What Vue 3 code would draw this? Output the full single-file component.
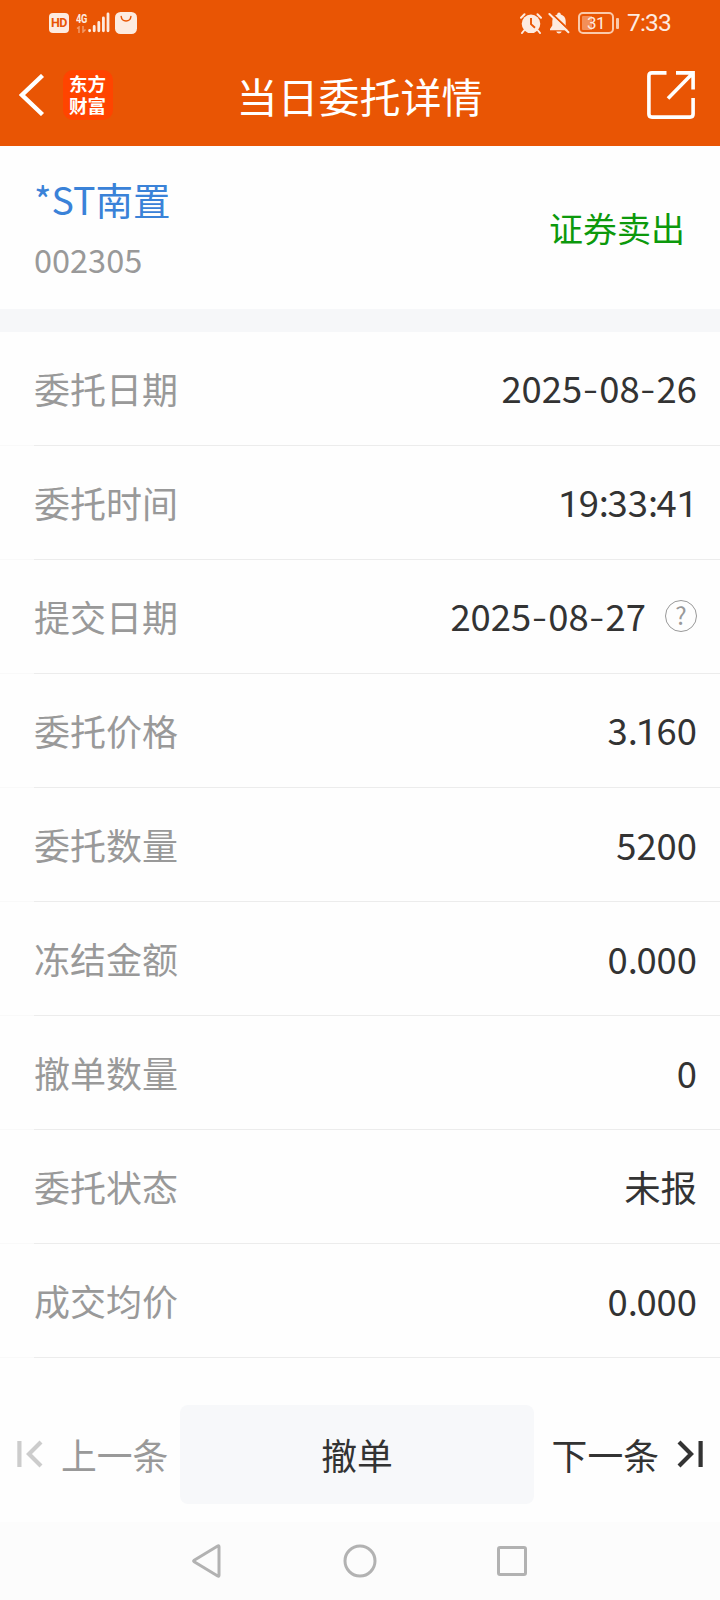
<script setup>
import { ref } from 'vue';

const stock = ref({ name: '*ST南置', code: '002305', side: '证券卖出' });

const rows = ref([
  { label: '委托日期', value: '2025-08-26' },
  { label: '委托时间', value: '19:33:41' },
  { label: '提交日期', value: '2025-08-27', help: true },
  { label: '委托价格', value: '3.160' },
  { label: '委托数量', value: '5200' },
  { label: '冻结金额', value: '0.000' },
  { label: '撤单数量', value: '0' },
  { label: '委托状态', value: '未报' },
  { label: '成交均价', value: '0.000' },
]);

// punctuation and ones are styled apart from the other digits
const partClasses = { '-': 'dash', 1: 'one', ':': 'colon', '.': 'dot' };

function splitValue(value) {
  return value.split(/([-1:.])/).filter(Boolean);
}
</script>

<template>
  <div class="page">
    <header class="header">
      <div class="status-bar">
        <div class="status-left">
          <span class="hd">HD</span>
          <span class="network">
            <span class="network-type">4G</span>
            <svg class="network-arrows" width="10" height="7" viewBox="0 0 10 7">
              <path d="M1 2.5 3 1v6M7 0v6l2.500-2.500" fill="none" stroke="#fff" stroke-width="1.500" />
            </svg>
          </span>
          <svg class="signal" width="22" height="21" viewBox="0 0 22 21">
            <g stroke="#fdebe0" stroke-width="2.800" stroke-linecap="round">
              <path d="M1.600 18.400v.4M6.200 14.500v4.300M10.800 10.500v8.300M15.400 6v12.800M20 2v16.800" />
            </g>
          </svg>
          <svg class="bag" width="22" height="22" viewBox="0 0 22 22">
            <rect width="22" height="22" rx="5.500" fill="#fdebe0" />
            <path d="M6.200 4.500c.7 6 9 6 9.700 0" fill="none" stroke="#e95504" stroke-width="1.500" stroke-linecap="round" />
          </svg>
        </div>
        <div class="status-right">
          <svg width="22" height="21" viewBox="0 0 22 21">
            <circle cx="11" cy="10.800" r="9.300" fill="#fdebe0" />
            <path d="M1 4.800 4.500 1.200M21 4.800 17.500 1.200M4 17.500 2 20M18 17.500 20 20" stroke="#fdebe0" stroke-width="2" stroke-linecap="round" />
            <path d="M11 5v6.200l4 3.600" fill="none" stroke="#e95504" stroke-width="1.900" />
          </svg>
          <svg class="bell" width="22" height="22" viewBox="0 0 22 22">
            <path d="M9.200 2.600c0-2.800 3.600-2.800 3.600 0 3 .8 4.900 3.300 4.900 6.500v4.500l2.300 3.400v1.200H2v-1.200l2.300-3.400V9.100c0-3.200 1.900-5.700 4.900-6.500zM8.300 19.600h5.400c-.7 2.600-4.700 2.600-5.400 0z" fill="#fdebe0" />
            <path d="M2.800.8 22 18.800" stroke="#e95504" stroke-width="2" />
            <path d="M1.400 2 20.400 20.200" stroke="#fdebe0" stroke-width="2" stroke-linecap="round" />
          </svg>
          <span class="battery">
            <span class="battery-body"><span class="battery-level">31</span></span>
            <span class="battery-cap"></span>
          </span>
          <span class="clock">7:33</span>
        </div>
      </div>
      <div class="title-bar">
        <div class="title-side">
          <svg width="26" height="42" viewBox="0 0 26 42">
            <path d="M23.500 1.500 3 21l20.500 19.500" fill="none" stroke="#fff" stroke-width="4.400" />
          </svg>
          <span class="logo">东方财富</span>
        </div>
        <h1 class="title">当日委托详情</h1>
        <div class="title-side end">
          <svg width="48" height="48" viewBox="0 0 48 48">
            <path d="M19.500 1.900H5Q1.900 1.900 1.900 5v38Q1.900 46.100 5 46.100h38q3.100 0 3.100-3.100V27M29 1.900h17.100V18.500M45.500 2.500 21 27.500" fill="none" stroke="#fff" stroke-width="3.600" />
          </svg>
        </div>
      </div>
    </header>

    <section class="summary">
      <div class="stock">
        <div class="stock-name">{{ stock.name }}</div>
        <div class="stock-code">{{ stock.code }}</div>
      </div>
      <div class="side">{{ stock.side }}</div>
    </section>

    <ul class="rows">
      <li v-for="row in rows" :key="row.label" class="row">
        <span class="row-label">{{ row.label }}</span>
        <span class="row-value">
          <span><span v-for="(part, i) in splitValue(row.value)" :key="i" :class="partClasses[part]">{{ part }}</span></span>
          <span v-if="row.help" class="help">?</span>
        </span>
      </li>
    </ul>

    <footer class="actions">
      <button type="button" class="step prev" disabled>
        <svg width="26" height="28" viewBox="0 0 26 28">
          <path d="M2.400 1v26M24 2 12 14l12 12" fill="none" stroke="currentColor" stroke-width="4.200" />
        </svg>
        <span>上一条</span>
      </button>
      <button type="button" class="cancel">撤单</button>
      <button type="button" class="step next">
        <span>下一条</span>
        <svg width="26" height="28" viewBox="0 0 26 28">
          <path d="M23.600 1v26M2 2l12 12L2 26" fill="none" stroke="currentColor" stroke-width="4.200" />
        </svg>
      </button>
    </footer>

    <nav class="system-nav">
      <svg width="34" height="34" viewBox="0 0 34 34">
        <path d="M28 2.800v28.400q0 1.500-1.300.8L3.200 17.800q-1.200-.8 0-1.600l23.500-14.200q1.300-.7 1.300.8z" />
      </svg>
      <svg width="34" height="34" viewBox="0 0 34 34">
        <circle cx="17" cy="17" r="15" />
      </svg>
      <svg width="34" height="34" viewBox="0 0 34 34">
        <rect x="3.500" y="3.500" width="27" height="27" rx="1.500" />
      </svg>
    </nav>
  </div>
</template>

<style>
body {
  margin: 0;
  background: #fefefe;
}
</style>

<style scoped>
.page {
  display: flex;
  flex-direction: column;
  width: 720px;
  height: 1600px;
  overflow: hidden;
  background: #fefefe;
  color: #333;
  font-family: 'Noto Sans CJK SC', sans-serif;
}

svg {
  display: block;
  flex: none;
}

.header {
  height: 146px;
  background: #e95504;
  color: #fff;
}

.status-bar {
  display: flex;
  justify-content: space-between;
  height: 46px;
  padding: 0 49px;
  box-sizing: border-box;
  color: #fdebe0;
  font-family: Roboto, sans-serif;
}

.status-left,
.status-right {
  display: flex;
  align-items: center;
}

.hd {
  width: 20px;
  height: 20px;
  border-radius: 4px;
  background: #fdebe0;
  color: #e95504;
  font-size: 12.5px;
  font-weight: 700;
  line-height: 20px;
  text-align: center;
  letter-spacing: -0.5px;
}

.network {
  display: flex;
  flex-direction: column;
  width: 11px;
  margin-left: 7px;
}

.network-type {
  width: 14px;
  font-size: 12.5px;
  font-weight: 700;
  line-height: 12px;
  letter-spacing: -0.3px;
  transform: scaleX(0.74);
  transform-origin: left;
}

.network-arrows {
  margin-top: 1px;
  opacity: 0.4;
}

.signal {
  margin: -1px 0 0 1px;
}

.bag {
  margin-left: 5px;
}

.bell {
  margin-left: 6px;
}

.battery {
  display: flex;
  align-items: center;
  margin-left: 8px;
}

.battery-body {
  width: 36px;
  height: 22px;
  padding: 2px;
  border: 2px solid #fbc9aa;
  border-radius: 5px;
  box-sizing: border-box;
}

.battery-level {
  display: block;
  width: 28px;
  height: 14px;
  border-radius: 1px;
  background: linear-gradient(90deg, #f38f58 35%, transparent 35%);
  font-size: 17px;
  line-height: 15px;
  text-align: center;
  letter-spacing: -0.5px;
}

.battery-cap {
  width: 3px;
  height: 11px;
  margin-left: 2px;
  border-radius: 1px;
  background: #fbc9aa;
}

.clock {
  margin-left: 8px;
  font-size: 24.5px;
  line-height: 46px;
  letter-spacing: -0.8px;
}

.title-bar {
  display: flex;
  align-items: center;
  height: 100px;
  padding: 0 25px 2px 19px;
  box-sizing: border-box;
}

.title-side {
  display: flex;
  flex: 1;
  align-items: center;
}

.title-side.end {
  justify-content: flex-end;
}

.logo {
  width: 50px;
  height: 50px;
  margin-left: 18px;
  padding: 2px 6px 4px;
  border-radius: 10px;
  box-sizing: border-box;
  background: #ff4400;
  font-size: 18.500px;
  font-weight: 700;
  line-height: 22px;
  word-break: break-all;
}

.title {
  margin: 0;
  padding-left: 5px;
  font-size: 41px;
  font-weight: 400;
  line-height: 60px;
}

.summary {
  display: flex;
  align-items: center;
  justify-content: space-between;
  height: 186px;
  padding: 0 35px 0 34px;
  border-bottom: 23px solid #f6f7f9;
  box-sizing: border-box;
}

.stock {
  padding-top: 2px;
}

.stock-name {
  color: #3a82d8;
  font-size: 37.500px;
  line-height: 60px;
}

.stock-code {
  color: #999;
  font-size: 32.500px;
  line-height: 60px;
}

.side {
  color: #0c990c;
  font-size: 34px;
}

.rows {
  margin: 0;
  padding: 0;
  list-style: none;
}

.row {
  display: flex;
  align-items: center;
  justify-content: space-between;
  height: 114px;
  padding: 0 23px 2px 34px;
  box-sizing: border-box;
  background: linear-gradient(90deg, #f9f9f9 34px, #ececec 34px) bottom / 100% 1px no-repeat;
  font-size: 36px;
  line-height: 52px;
}

.row-label {
  color: #999;
}

.row-value {
  display: flex;
  align-items: center;
  font-size: 36.400px;
}

.dash {
  font-family: Inter, sans-serif;
  font-weight: 300;
  letter-spacing: 0.5px;
}

.one {
  font-family: Roboto, sans-serif;
  font-size: 37.500px;
  letter-spacing: -0.8px;
}

.colon,
.dot {
  letter-spacing: -1.500px;
}

.help {
  width: 32px;
  height: 32px;
  margin-left: 19px;
  border: 1.500px solid #999;
  border-radius: 50%;
  box-sizing: border-box;
  color: #999;
  font-size: 24px;
  line-height: 28px;
  text-align: center;
}

.actions {
  display: flex;
  align-items: center;
  justify-content: space-between;
  height: 164px;
  padding: 29px 17px 0;
  box-sizing: border-box;
}

button {
  padding: 0 0 2px;
  border: none;
  background: none;
  color: #333;
  font-family: inherit;
  font-size: 35.800px;
}

.step {
  display: flex;
  align-items: center;
  gap: 18px;
}

.step svg {
  margin-top: 1px;
}

.prev {
  color: #999;
}

.prev svg {
  color: #ccc;
}

.cancel {
  width: 354px;
  height: 99px;
  margin-right: 6px;
  border-radius: 8px;
  background: #f7f8fa;
}

.system-nav {
  display: flex;
  align-items: center;
  justify-content: center;
  gap: 118px;
  height: 78px;
  background: #fcfcfc;
}

.system-nav svg {
  fill: none;
  stroke: #b2b2b2;
  stroke-width: 3;
}
</style>
